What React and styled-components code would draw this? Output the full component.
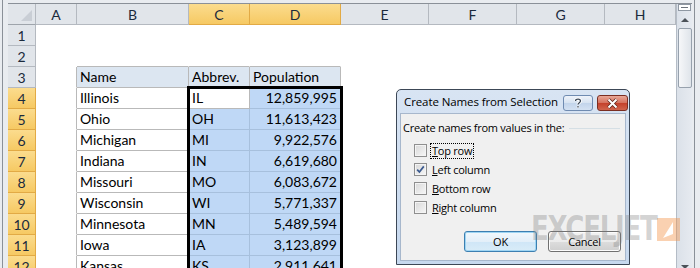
import React from 'react';
import styled, {createGlobalStyle} from 'styled-components';

const GlobalStyle = createGlobalStyle`
  html, body {
    margin: 0;
    padding: 0;
    background: #fff;
    overflow: hidden;
  }
`;

// ---- window frame ----
const Window = styled.div`
  position: relative;
  width: 700px;
  height: 268px;
  overflow: hidden;
  display: flex;
  background: #e9ecf0;
`;

const SideFrame = styled.div`
  width: 8px;
  flex: none;
  background: linear-gradient(
    to right,
    #e9ecf0 0 ${p => p.$line}px,
    #8a9098 ${p => p.$line}px ${p => p.$line + 1}px,
    #e9ecf0 ${p => p.$line + 1}px
  );
`;

const Main = styled.div`
  flex: 1;
  display: flex;
  flex-direction: column;
  min-width: 0;
`;

const TopFrame = styled.div`
  height: 4px;
  flex: none;
  background: linear-gradient(#e9ecf0 0 3px, #8a9098 3px 4px);
`;

const SheetRow = styled.div`
  flex: 1;
  display: flex;
  min-height: 0;
`;

// ---- grid ----
const Sheet = styled.div`
  display: grid;
  grid-template-columns: 28px 41px 112px 61px 91px 88px 88px 88px 71px;
  grid-auto-rows: 21px;
  width: 668px;
  overflow: hidden;
  background: #fff;
  font-family: 'Lato', 'Liberation Sans', sans-serif;
  font-size: 14px;
  color: #000;
`;

const HeadCell = styled.div`
  grid-row: ${p => p.$row};
  grid-column: ${p => p.$col};
  box-sizing: border-box;
  display: flex;
  align-items: center;
  justify-content: center;
  padding-top: 1px;
  color: #1b2a3c;
  background: ${p => (p.$sel ? 'linear-gradient(#fbdc8e, #f6c963)' : '#e1e5ea')};
  border-right: 1px solid ${p => (p.$sel ? '#e2aa45' : '#b4b9c0')};
  border-bottom: 1px solid ${p => (p.$sel ? '#e2aa45' : '#b4b9c0')};
`;

const Corner = styled.div`
  grid-row: 1;
  grid-column: 1;
  box-sizing: border-box;
  position: relative;
  background: #e1e5ea;
  border-right: 1px solid #b4b9c0;
  border-bottom: 1px solid #9ea4ab;
  &::after {
    content: '';
    position: absolute;
    right: 3px;
    bottom: 3px;
    border-left: 11px solid transparent;
    border-bottom: 11px solid #c9ced5;
  }
`;

const Cell = styled.div`
  grid-row: ${p => p.$row};
  grid-column: ${p => p.$col};
  box-sizing: border-box;
  display: flex;
  align-items: flex-end;
  justify-content: ${p => (p.$num ? 'flex-end' : 'flex-start')};
  padding: 0 3px 2px 3px;
  white-space: nowrap;
  overflow: hidden;
  line-height: 17px;
  background: ${p => p.$fill};
  border-right: 1px solid ${p => p.$right};
  border-bottom: 1px solid ${p => p.$bottom};
`;

const SelectionBox = styled.div`
  grid-column: 4 / 6;
  grid-row: 5 / span 9;
  margin: -2px -2px 0 -2px;
  border: 3px solid #000;
  border-bottom: none;
  z-index: 1;
  pointer-events: none;
`;

// ---- scrollbar ----
const ScrollBar = styled.div`
  width: 16px;
  flex: none;
  box-sizing: border-box;
  border-left: 1px solid #b4bcc6;
  background: linear-gradient(to right, #dbe1e9, #e6eaf0);
  display: flex;
  flex-direction: column;
  align-items: center;
`;

const SplitBox = styled.div`
  width: 13px;
  height: 7px;
  box-sizing: border-box;
  border: 1px solid #8e97a2;
  background: #fff;
  display: flex;
  align-items: center;
  justify-content: center;
  &::after {
    content: '';
    width: 7px;
    height: 1px;
    background: #6c737c;
  }
`;

const Arrow = styled.div`
  width: 0;
  height: 0;
  margin: ${p => (p.$down ? 'auto 0 -1px' : '7px 0 0')};
  border-left: 4px solid transparent;
  border-right: 4px solid transparent;
  ${p => (p.$down ? 'border-top: 4px solid #4b5158;' : 'border-bottom: 4px solid #4b5158;')}
`;

const Thumb = styled.div`
  width: 14px;
  height: 60px;
  margin-top: 6px;
  box-sizing: border-box;
  border: 1px solid #97a1ad;
  border-radius: 2px;
  background: linear-gradient(to right, #f6f7f9, #dfe4ea);
`;

// ---- dialog ----
const Dialog = styled.div`
  position: absolute;
  left: 396px;
  top: 89px;
  width: 234px;
  height: 176px;
  box-sizing: border-box;
  border: 1px solid #3c4756;
  border-radius: 5px 5px 0 0;
  background: linear-gradient(#d8e4f3, #c6d8ee);
  padding: 0 3px 3px;
  display: flex;
  flex-direction: column;
  font-family: 'Open Sans', 'Noto Sans', sans-serif;
  font-size: 11px;
  letter-spacing: -0.25px;
  color: #000;
  z-index: 2;
`;

const TitleBar = styled.div`
  height: 23px;
  flex: none;
  display: flex;
  align-items: flex-start;
  justify-content: space-between;
  margin-right: -2px;
`;

const Title = styled.span`
  padding: 4px 0 0 4px;
  font-size: 11.5px;
  letter-spacing: -0.1px;
  line-height: 16px;
`;

const CaptionButtons = styled.div`
  display: flex;
  gap: 4px;
  padding-top: 5px;
`;

const CaptionButton = styled.div`
  width: ${p => (p.$close ? 31 : 30)}px;
  height: 16px;
  box-sizing: border-box;
  border: 1px solid ${p => (p.$close ? '#7b2e22' : '#6f8bb1')};
  border-radius: 3px;
  background: ${p =>
    p.$close
      ? 'linear-gradient(#e9a898, #d4705c 50%, #c4402a 51%, #d0654d)'
      : 'linear-gradient(#eef3fa, #d6e2f1 50%, #c2d4eb 51%, #d3e1f2)'};
  display: flex;
  align-items: center;
  justify-content: center;
`;

const Panel = styled.div`
  flex: 1;
  box-sizing: border-box;
  border: 1px solid #a7b7cc;
  background: #f0f0f0;
  padding: 6px 4px 0 2px;
  display: flex;
  flex-direction: column;
`;

const GroupLabel = styled.div`
  display: flex;
  align-items: center;
  line-height: 15px;
  &::after {
    content: '';
    flex: 1;
    height: 1px;
    margin: 1px 1px 0 5px;
    background: #d5dfe5;
  }
`;

const Options = styled.div`
  margin-top: 6px;
  padding-left: 11px;
  display: flex;
  flex-direction: column;
`;

const Option = styled.label`
  height: 19px;
  display: flex;
  align-items: center;
  gap: 4px;
`;

const Box = styled.span`
  width: 13px;
  height: 13px;
  box-sizing: border-box;
  border: 1px solid #8f8f8f;
  background: linear-gradient(135deg, #d8d8d8, #f7f7f7);
  box-shadow: inset 0 0 0 1px #f4f4f4;
  display: flex;
  align-items: center;
  justify-content: center;
`;

const OptionText = styled.span`
  line-height: 14px;
  padding: 0 1px;
  border: 1px dotted ${p => (p.$focus ? '#000' : 'transparent')};
  margin-left: -1px;
`;

const Buttons = styled.div`
  margin-top: auto;
  margin-bottom: 8px;
  display: flex;
  justify-content: flex-end;
  gap: 11px;
`;

const Button = styled.div`
  width: 73px;
  height: 21px;
  box-sizing: border-box;
  border: 1px solid ${p => (p.$default ? '#3c7fb1' : '#707070')};
  border-radius: 3px;
  background: ${p =>
    p.$default
      ? 'linear-gradient(#f2f8fc, #e3eff9 50%, #cfe6f7 51%, #d9ecf8)'
      : 'linear-gradient(#f2f2f2, #ebebeb 50%, #dddddd 51%, #cfcfcf)'};
  box-shadow: inset 0 0 0 1px ${p => (p.$default ? '#9fd5f3' : '#fcfcfc')};
  display: flex;
  align-items: center;
  justify-content: center;
`;

// ---- watermark ----
const Watermark = styled.div`
  position: absolute;
  left: 531px;
  top: 214px;
  display: flex;
  align-items: center;
  gap: 3px;
  z-index: 3;
  pointer-events: none;
`;

const MarkText = styled.span`
  display: inline-block;
  width: 123px;
  white-space: nowrap;
  font-family: 'DejaVu Sans Condensed', 'Liberation Sans Narrow', sans-serif;
  font-weight: bold;
  font-size: 33px;
  line-height: 30px;
  letter-spacing: -1.5px;
  color: rgba(120, 120, 120, 0.33);
  transform: scaleX(0.88);
  transform-origin: left center;
`;

const MarkLogo = styled.span`
  width: 23px;
  height: 23px;
  background: rgba(242, 145, 70, 0.42);
  display: flex;
`;

const cols = ['A', 'B', 'C', 'D', 'E', 'F', 'G', 'H'];

const data = [
  ['Illinois', 'IL', '12,859,995'],
  ['Ohio', 'OH', '11,613,423'],
  ['Michigan', 'MI', '9,922,576'],
  ['Indiana', 'IN', '6,619,680'],
  ['Missouri', 'MO', '6,083,672'],
  ['Wisconsin', 'WI', '5,771,337'],
  ['Minnesota', 'MN', '5,489,594'],
  ['Iowa', 'IA', '3,123,899'],
  ['Kansas', 'KS', '2,911,641']
];

const LINE = '#b9b9b9';
const SEL_LINE = '#a7c0dd';

const cellText = (r, c) => {
  if (r === 3) return ['Name', 'Abbrev.', 'Population'][c - 1] || '';
  if (r >= 4 && c >= 1 && c <= 3) return data[r - 4][c - 1];
  return '';
};

const renderCells = () => {
  const out = [];
  for (let r = 1; r <= 12; r++) {
    for (let c = 0; c < cols.length; c++) {
      const inTable = r >= 3 && c >= 1 && c <= 3;
      const inSel = r >= 4 && (c === 2 || c === 3) && !(r === 4 && c === 2);
      let fill = '#fff';
      if (r === 3 && inTable) fill = '#dce6f1';
      if (inSel) fill = '#bfd8f6';
      const line = inSel ? SEL_LINE : LINE;
      const right = inTable || (c === 0 && r >= 3) ? line : 'transparent';
      const bottom = inTable || (r === 2 && c >= 1 && c <= 3) ? line : 'transparent';
      out.push(
        <Cell
          key={`${r}-${c}`}
          $row={r + 1}
          $col={c + 2}
          $fill={fill}
          $right={right}
          $bottom={bottom}
          $num={c === 3 && r >= 4}
        >
          {cellText(r, c)}
        </Cell>
      );
    }
  }
  return out;
};

const HelpIcon = () => (
  <svg width="12" height="12" viewBox="0 0 12 12">
    <path
      d="M3.5 4 C3.5 1.5 8.5 1.5 8.5 4 C8.5 5.6 6 5.8 6 7.6"
      fill="none"
      stroke="#fff"
      strokeWidth="3"
    />
    <path
      d="M3.5 4 C3.5 1.5 8.5 1.5 8.5 4 C8.5 5.6 6 5.8 6 7.6"
      fill="none"
      stroke="#3a4656"
      strokeWidth="1.3"
    />
    <rect x="4.8" y="8.6" width="2.4" height="2.4" fill="#fff" />
    <rect x="5.3" y="9.1" width="1.4" height="1.4" fill="#3a4656" />
  </svg>
);

const CloseIcon = () => (
  <svg width="13" height="11" viewBox="0 0 13 11">
    <path d="M2.5 1.5 L10.5 9.5 M10.5 1.5 L2.5 9.5" stroke="#5e241a" strokeWidth="3.6" />
    <path d="M2.5 1.5 L10.5 9.5 M10.5 1.5 L2.5 9.5" stroke="#fff" strokeWidth="2" />
  </svg>
);

const Check = () => (
  <svg width="9" height="9" viewBox="0 0 9 9">
    <path d="M1.2 4.6 L3.4 7 L7.8 1.4" fill="none" stroke="#3b5a8f" strokeWidth="1.7" />
  </svg>
);

const options = [
  {key: 'T', rest: 'op row', focus: true},
  {key: 'L', rest: 'eft column', checked: true},
  {key: 'B', rest: 'ottom row'},
  {key: 'R', rest: 'ight column'}
];

const App = () => {
  return (
    <>
      <GlobalStyle />
      <Window>
        <SideFrame $line={2} />
        <Main>
          <TopFrame />
          <SheetRow>
            <Sheet>
              <Corner />
              {cols.map((name, i) => (
                <HeadCell key={name} $row={1} $col={i + 2} $sel={name === 'C' || name === 'D'}>
                  {name}
                </HeadCell>
              ))}
              {Array.from({length: 12}, (_, i) => (
                <HeadCell key={`r${i}`} $row={i + 2} $col={1} $sel={i + 1 >= 4}>
                  {i + 1}
                </HeadCell>
              ))}
              {renderCells()}
              <SelectionBox />
            </Sheet>
            <ScrollBar>
              <SplitBox />
              <Arrow />
              <Thumb />
              <Arrow $down />
            </ScrollBar>
          </SheetRow>
        </Main>
        <SideFrame $line={2} />

        <Dialog>
          <TitleBar>
            <Title>Create Names from Selection</Title>
            <CaptionButtons>
              <CaptionButton>
                <HelpIcon />
              </CaptionButton>
              <CaptionButton $close>
                <CloseIcon />
              </CaptionButton>
            </CaptionButtons>
          </TitleBar>
          <Panel>
            <GroupLabel>Create names from values in the:</GroupLabel>
            <Options>
              {options.map(o => (
                <Option key={o.key}>
                  <Box>{o.checked && <Check />}</Box>
                  <OptionText $focus={o.focus}>
                    <u>{o.key}</u>
                    {o.rest}
                  </OptionText>
                </Option>
              ))}
            </Options>
            <Buttons>
              <Button $default>OK</Button>
              <Button>Cancel</Button>
            </Buttons>
          </Panel>
        </Dialog>

        <Watermark>
          <MarkText>EXCELJET</MarkText>
          <MarkLogo>
            <svg width="23" height="23" viewBox="0 0 23 23">
              <polygon points="16,4 16,16 6,20" fill="#fff" />
            </svg>
          </MarkLogo>
        </Watermark>
      </Window>
    </>
  );
};

export default App;
